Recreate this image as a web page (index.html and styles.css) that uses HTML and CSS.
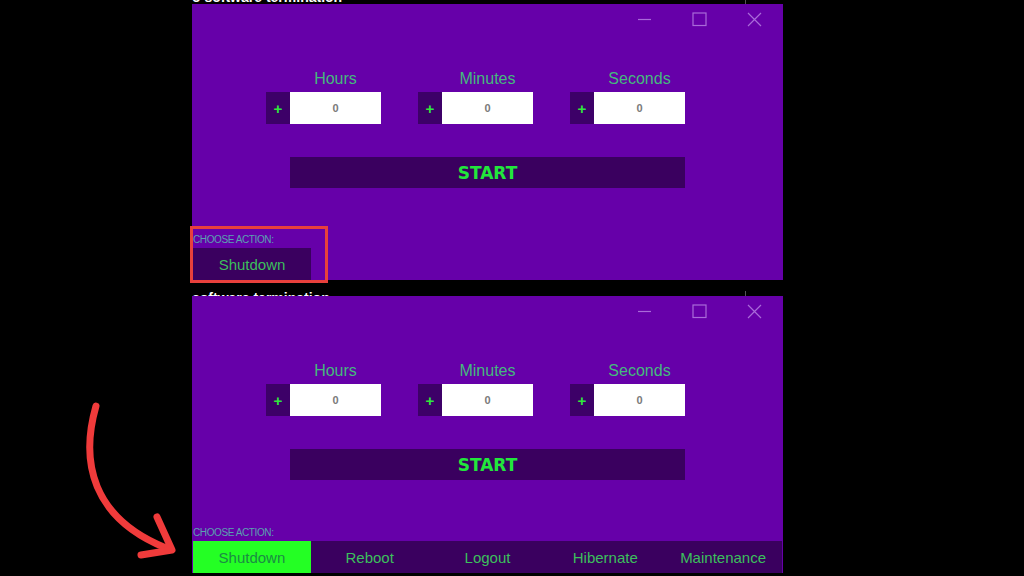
FILE: index.html
```html
<!DOCTYPE html>
<html lang="en">
<head>
    <meta charset="UTF-8">
    <meta name="viewport" content="width=device-width, initial-scale=1.0">
    <title>Shutdown Timer</title>
    <link rel="stylesheet" href="styles.css">
</head>
<body>
    <div class="screen">
        <div class="backdrop backdrop-top">
            <span class="backdrop-text">o software termination</span>
        </div>

        <section class="window">
            <div class="titlebar">
                <span class="ctl"><svg viewBox="0 0 15 15"><path d="M1 7.5h13"/></svg></span>
                <span class="ctl"><svg viewBox="0 0 15 15"><rect x="1" y="1" width="13" height="12.5"/></svg></span>
                <span class="ctl"><svg viewBox="0 0 15 15"><path d="M1 1l13 13M14 1L1 14"/></svg></span>
            </div>
            <div class="timer-row">
                <div class="field">
                    <label class="field-label">Hours</label>
                    <button class="plus">+</button>
                    <input class="field-input" type="text" value="0">
                </div>
                <div class="field">
                    <label class="field-label">Minutes</label>
                    <button class="plus">+</button>
                    <input class="field-input" type="text" value="0">
                </div>
                <div class="field">
                    <label class="field-label">Seconds</label>
                    <button class="plus">+</button>
                    <input class="field-input" type="text" value="0">
                </div>
            </div>
            <button class="start-btn">START</button>
            <div class="action">
                <div class="action-label">CHOOSE ACTION:</div>
                <div class="action-list">
                    <button class="action-btn">Shutdown</button>
                </div>
            </div>
        </section>

        <div class="backdrop backdrop-gap">
            <span class="backdrop-text">software termination</span>
        </div>

        <section class="window window-tall">
            <div class="titlebar">
                <span class="ctl"><svg viewBox="0 0 15 15"><path d="M1 7.5h13"/></svg></span>
                <span class="ctl"><svg viewBox="0 0 15 15"><rect x="1" y="1" width="13" height="12.5"/></svg></span>
                <span class="ctl"><svg viewBox="0 0 15 15"><path d="M1 1l13 13M14 1L1 14"/></svg></span>
            </div>
            <div class="timer-row">
                <div class="field">
                    <label class="field-label">Hours</label>
                    <button class="plus">+</button>
                    <input class="field-input" type="text" value="0">
                </div>
                <div class="field">
                    <label class="field-label">Minutes</label>
                    <button class="plus">+</button>
                    <input class="field-input" type="text" value="0">
                </div>
                <div class="field">
                    <label class="field-label">Seconds</label>
                    <button class="plus">+</button>
                    <input class="field-input" type="text" value="0">
                </div>
            </div>
            <button class="start-btn">START</button>
            <div class="action">
                <div class="action-label">CHOOSE ACTION:</div>
                <div class="action-list tabs">
                    <button class="action-btn active">Shutdown</button>
                    <button class="action-btn">Reboot</button>
                    <button class="action-btn">Logout</button>
                    <button class="action-btn">Hibernate</button>
                    <button class="action-btn">Maintenance</button>
                </div>
            </div>
        </section>

        <!-- highlight around the single action button -->
        <div class="highlight"></div>

        <!-- arrow pointing at the expanded action bar -->
        <svg class="arrow" viewBox="0 0 1024 576">
            <path d="M96 406 C 80 462, 92 518, 166 548"/>
            <path d="M157 517 L 172 550 L 141 555"/>
        </svg>
    </div>
</body>
</html>
```

FILE: styles.css
```css
* {
    box-sizing: border-box;
}

body {
    margin: 0;
    background: #000;
    font-family: 'Liberation Sans', Arial, sans-serif;
}

.screen {
    width: 1024px;
    height: 576px;
    overflow: hidden;
    position: relative;
    padding-left: 192px;
    display: flex;
    flex-direction: column;
}

/* strips of the window behind */
.backdrop {
    display: flex;
    width: 591px;
    overflow: hidden;
    flex-shrink: 0;
}

.backdrop-top {
    height: 4px;
    align-items: flex-end;
}

.backdrop-gap {
    height: 16px;
    align-items: flex-start;
    padding-top: 11px;
}

.backdrop-text {
    width: 554px;
    flex-shrink: 0;
    border-right: 1px solid #555;
    color: #fff;
    font-size: 14px;
    line-height: 14px;
    font-weight: bold;
    white-space: nowrap;
}

.window {
    width: 591px;
    height: 276px;
    flex-shrink: 0;
    background: #6600a9;
    display: flex;
    flex-direction: column;
    padding: 0 1px;
}

.window-tall {
    height: 277px;
}

.titlebar {
    height: 30px;
    display: flex;
    justify-content: flex-end;
}

.ctl {
    width: 55px;
    display: flex;
    align-items: center;
    justify-content: center;
}

.ctl svg {
    width: 15px;
    height: 15px;
    fill: none;
    stroke: #a96ad9;
    stroke-width: 1.2;
}

.timer-row {
    display: flex;
    gap: 37px;
    margin: 36px 0 0 73px;
}

.field {
    display: grid;
    grid-template-columns: 24px 91px;
    grid-template-rows: 18px 32px;
    row-gap: 4px;
}

.field-label {
    grid-column: 2;
    text-align: center;
    color: #45b97d;
    font-size: 16px;
    line-height: 18px;
}

.plus {
    grid-row: 2;
    grid-column: 1;
    border: 0;
    padding: 0;
    background: #3d0068;
    color: #30e83c;
    font-family: 'Liberation Sans', Arial, sans-serif;
    font-weight: bold;
    font-size: 15px;
}

.field-input {
    grid-row: 2;
    grid-column: 2;
    width: 91px;
    border: 0;
    padding: 0;
    background: #fff;
    text-align: center;
    color: #7a7a7a;
    font-family: 'Liberation Sans', Arial, sans-serif;
    font-weight: bold;
    font-size: 11px;
}

.start-btn {
    margin: 33px 0 0 97px;
    width: 395px;
    height: 31px;
    border: 0;
    background: #3a005f;
    color: #22e63c;
    font-family: 'DejaVu Sans', Verdana, sans-serif;
    font-weight: bold;
    font-size: 17px;
    padding-top: 2px;
}

.action {
    margin-top: auto;
}

.action-label {
    font-size: 10px;
    line-height: 12px;
    letter-spacing: -0.4px;
    color: #5aa2b0;
    margin-bottom: 2px;
}

.action-list {
    display: flex;
    height: 32px;
}

.action-btn {
    width: 118px;
    border: 0;
    padding: 0;
    background: #3a005f;
    color: #3cbf5c;
    font-family: 'Liberation Sans', Arial, sans-serif;
    font-size: 15px;
}

.tabs {
    background: #3a005f;
}

.tabs .action-btn {
    flex: 1;
    width: auto;
}

.action-btn.active {
    background: #24ff24;
    color: #1b8c44;
}

.highlight {
    position: absolute;
    left: 190px;
    top: 226px;
    width: 138px;
    height: 57px;
    border: 3px solid #e8403c;
}

.arrow {
    position: absolute;
    left: 0;
    top: 0;
    width: 1024px;
    height: 576px;
    pointer-events: none;
    fill: none;
    stroke: #f03b3b;
    stroke-width: 7;
    stroke-linecap: round;
    stroke-linejoin: round;
}
```
